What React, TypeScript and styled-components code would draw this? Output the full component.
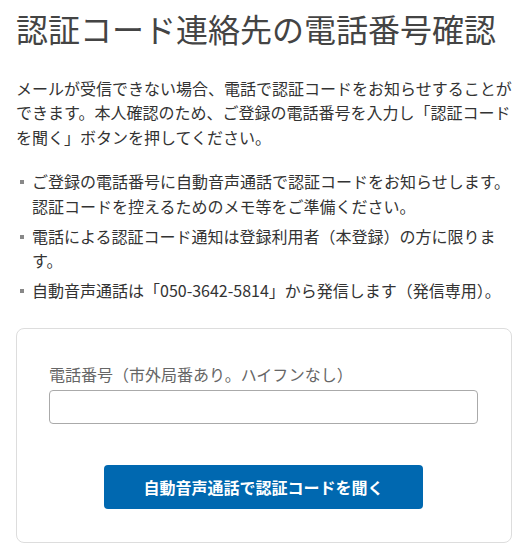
import React from "react"
import styled, { createGlobalStyle } from "styled-components"

const GlobalStyle = createGlobalStyle`
  html, body {
    margin: 0;
    padding: 0;
    background: #fff;
  }
  body {
    font-family: "Noto Sans CJK JP", "Noto Sans", sans-serif;
    color: #333;
  }
  * {
    box-sizing: border-box;
  }
`

const Page = styled.main`
  padding: 8px 16px 0;
`

const Title = styled.h1`
  margin: 0;
  font-size: 32px;
  font-weight: 400;
  line-height: 1.3;
  color: #444;
`

const Lead = styled.p`
  margin: 26px 0 0;
  font-size: 16px;
  line-height: 24.8px;
`

const NoteList = styled.ul`
  margin: 19px 0 0;
  padding: 0;
  list-style: none;
  display: flex;
  flex-direction: column;
  gap: 5px;
`

const NoteItem = styled.li`
  position: relative;
  padding-left: 16px;
  font-size: 16px;
  line-height: 24.8px;

  &::before {
    content: "";
    position: absolute;
    left: 4px;
    top: 11px;
    width: 4px;
    height: 4px;
    background: #888;
  }
`

const Card = styled.section`
  margin-top: 25px;
  border: 1px solid #ddd;
  border-radius: 8px;
  padding: 33px 33px 33px 32px;
  display: flex;
  flex-direction: column;
`

const Label = styled.label`
  font-size: 16px;
  line-height: 24.8px;
  color: #666;
`

const PhoneInput = styled.input`
  margin-top: 3px;
  height: 34px;
  width: 100%;
  border: 1px solid #aaa;
  border-radius: 4px;
  padding: 0 10px;
  font-size: 16px;
  font-family: inherit;
  background: #fff;
`

const SubmitButton = styled.button`
  margin: 41px auto 0;
  width: 319px;
  height: 44px;
  border: none;
  border-radius: 4px;
  background: #0068b0;
  color: #fff;
  font-family: inherit;
  font-size: 16px;
  font-weight: 700;
  cursor: pointer;
`

const notes = [
  "ご登録の電話番号に自動音声通話で認証コードをお知らせします。認証コードを控えるためのメモ等をご準備ください。",
  "電話による認証コード通知は登録利用者（本登録）の方に限ります。",
  "自動音声通話は「050-3642-5814」から発信します（発信専用）。",
]

const App = (): JSX.Element => (
  <>
    <GlobalStyle />
    <Page>
      <Title>認証コード連絡先の電話番号確認</Title>
      <Lead>
        メールが受信できない場合、電話で認証コードをお知らせすることができます。本人確認のため、ご登録の電話番号を入力し「認証コードを聞く」ボタンを押してください。
      </Lead>
      <NoteList>
        {notes.map((n) => (
          <NoteItem key={n}>{n}</NoteItem>
        ))}
      </NoteList>
      <Card>
        <Label htmlFor="tel">電話番号（市外局番あり。ハイフンなし）</Label>
        <PhoneInput id="tel" type="tel" />
        <SubmitButton type="button">自動音声通話で認証コードを聞く</SubmitButton>
      </Card>
    </Page>
  </>
)

export default App
